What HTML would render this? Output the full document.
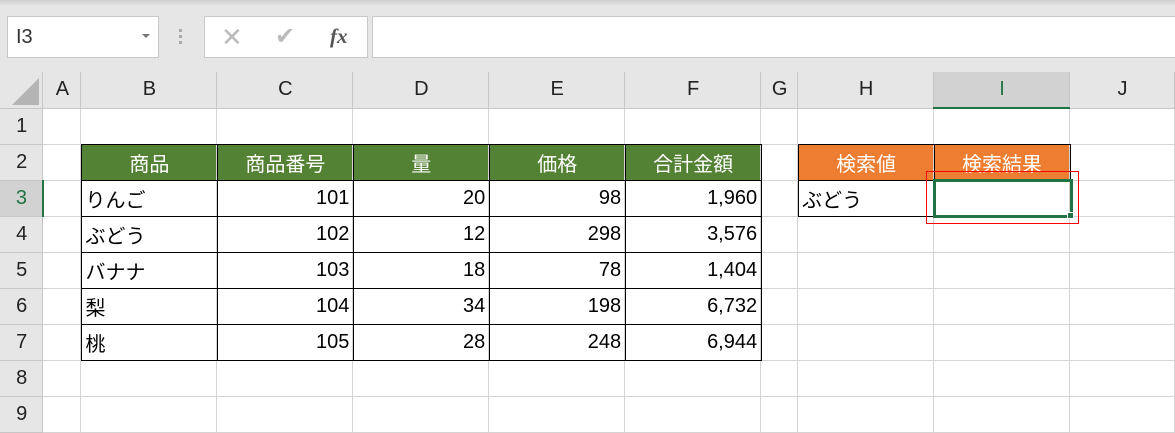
<!DOCTYPE html>
<html><head><meta charset="utf-8"><style>
*{margin:0;padding:0;box-sizing:border-box}
body{width:1175px;height:433px;overflow:hidden;background:#e6e6e6;font-family:"Liberation Sans","Noto Sans CJK JP",sans-serif;position:relative}
.abs{position:absolute}
table{position:absolute;left:0;top:72px;border-collapse:collapse;table-layout:fixed;background:#fff}
td{height:36px;border-right:1px solid #d4d4d4;border-bottom:1px solid #d4d4d4;font-size:20px;padding:0 3px 0 4px;white-space:nowrap;overflow:hidden;color:#000}
tr.h td{background:#e6e6e6;text-align:center;font-size:20px;border-color:#c6c6c6;color:#222}
td.rh{background:#e6e6e6;text-align:center;border-color:#c6c6c6;color:#222}
.g{background:#548235;color:#fff;text-align:center}
.o{background:#ed7d31;color:#fff;text-align:center}
.r{text-align:right}
.hl{position:absolute;height:1px;background:#000}
.vl{position:absolute;width:1px;background:#000}
</style></head><body>
<div class="abs" style="left:0;top:0;width:1175px;height:6px;background:linear-gradient(#cfcfcf,#e6e6e6)"></div>
<div class="abs" style="left:7px;top:16px;width:152px;height:42px;background:#fff;border:1px solid #c8c8c8;font-size:20px;line-height:40px;padding-left:8px;color:#333">I3</div>
<div class="abs" style="left:142px;top:34px;border-left:4px solid transparent;border-right:4px solid transparent;border-top:4px solid #777"></div>
<div class="abs" style="left:179px;top:29px;width:3px;height:3px;background:#aaa;box-shadow:0 6px #aaa,0 12px #aaa"></div>
<div class="abs" style="left:204px;top:16px;width:164px;height:42px;background:#fff;border:1px solid #c8c8c8"></div>
<div class="abs" style="left:221px;top:22px;font-size:26px;color:#bbb">✕</div>
<div class="abs" style="left:275px;top:22px;font-size:24px;color:#bbb">✔</div>
<div class="abs" style="left:330px;top:24px;font-size:21px;color:#555;font-family:'Liberation Serif',serif;font-style:italic;font-weight:bold">fx</div>
<div class="abs" style="left:372px;top:16px;width:810px;height:42px;background:#fff;border:1px solid #c8c8c8"></div>
<table>
<colgroup><col style="width:43px"><col style="width:38px"><col style="width:136px"><col style="width:136px"><col style="width:136px"><col style="width:136px"><col style="width:136px"><col style="width:37px"><col style="width:136px"><col style="width:136px"><col style="width:105px"></colgroup>
<tr class="h"><td></td><td>A</td><td>B</td><td>C</td><td>D</td><td>E</td><td>F</td><td>G</td><td>H</td><td style="background:#d2d2d2;border-bottom:2px solid #217346;color:#217346">I</td><td>J</td></tr>
<tr><td class="rh">1</td><td></td><td></td><td></td><td></td><td></td><td></td><td></td><td></td><td></td><td></td></tr>
<tr><td class="rh">2</td><td></td><td class="g">商品</td><td class="g">商品番号</td><td class="g">量</td><td class="g">価格</td><td class="g">合計金額</td><td></td><td class="o">検索値</td><td class="o">検索結果</td><td></td></tr>
<tr><td class="rh" style="background:#d2d2d2;border-right:2px solid #217346;color:#217346">3</td><td></td><td>りんご</td><td class="r">101</td><td class="r">20</td><td class="r">98</td><td class="r">1,960</td><td></td><td>ぶどう</td><td></td><td></td></tr>
<tr><td class="rh">4</td><td></td><td>ぶどう</td><td class="r">102</td><td class="r">12</td><td class="r">298</td><td class="r">3,576</td><td></td><td></td><td></td><td></td></tr>
<tr><td class="rh">5</td><td></td><td>バナナ</td><td class="r">103</td><td class="r">18</td><td class="r">78</td><td class="r">1,404</td><td></td><td></td><td></td><td></td></tr>
<tr><td class="rh">6</td><td></td><td>梨</td><td class="r">104</td><td class="r">34</td><td class="r">198</td><td class="r">6,732</td><td></td><td></td><td></td><td></td></tr>
<tr><td class="rh">7</td><td></td><td>桃</td><td class="r">105</td><td class="r">28</td><td class="r">248</td><td class="r">6,944</td><td></td><td></td><td></td><td></td></tr>
<tr><td class="rh">8</td><td></td><td></td><td></td><td></td><td></td><td></td><td></td><td></td><td></td><td></td></tr>
<tr><td class="rh">9</td><td></td><td></td><td></td><td></td><td></td><td></td><td></td><td></td><td></td><td></td></tr>
</table>
<div class="abs" style="left:12px;top:78px;width:0;height:0;border-left:27px solid transparent;border-bottom:27px solid #b4b4b4"></div>
<div class="hl" style="left:81px;top:144px;width:681px"></div>
<div class="hl" style="left:81px;top:180px;width:681px"></div>
<div class="hl" style="left:81px;top:216px;width:681px"></div>
<div class="hl" style="left:81px;top:252px;width:681px"></div>
<div class="hl" style="left:81px;top:288px;width:681px"></div>
<div class="hl" style="left:81px;top:324px;width:681px"></div>
<div class="hl" style="left:81px;top:360px;width:681px"></div>
<div class="vl" style="left:81px;top:144px;height:217px"></div>
<div class="vl" style="left:217px;top:144px;height:217px"></div>
<div class="vl" style="left:353px;top:144px;height:217px"></div>
<div class="vl" style="left:489px;top:144px;height:217px"></div>
<div class="vl" style="left:625px;top:144px;height:217px"></div>
<div class="vl" style="left:761px;top:144px;height:217px"></div>
<div class="hl" style="left:798px;top:144px;width:273px"></div>
<div class="hl" style="left:798px;top:180px;width:273px"></div>
<div class="hl" style="left:798px;top:216px;width:137px"></div>
<div class="vl" style="left:798px;top:144px;height:73px"></div>
<div class="vl" style="left:934px;top:144px;height:73px"></div>
<div class="vl" style="left:1070px;top:144px;height:37px"></div>
<div class="abs" style="left:933px;top:179px;width:140px;height:39px;border:3px solid #217346"></div>
<div class="abs" style="left:1067px;top:212px;width:7px;height:7px;background:#217346;border:1px solid #fff"></div>
<div class="abs" style="left:926px;top:171px;width:153px;height:53px;border:1px solid #f00"></div>
</body></html>
